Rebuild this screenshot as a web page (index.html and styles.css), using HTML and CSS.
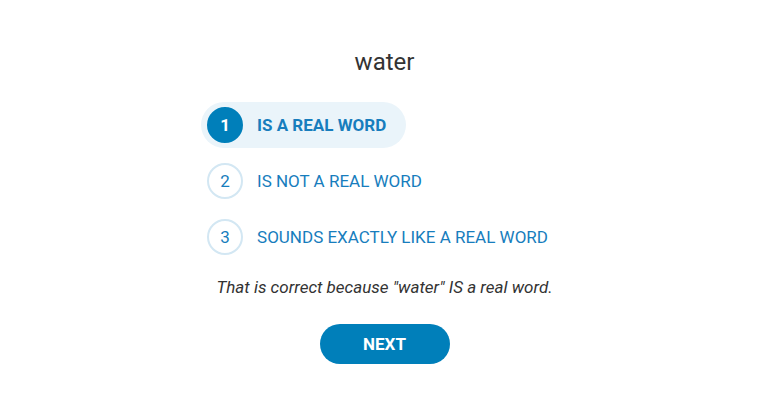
FILE: index.html
```html
<!DOCTYPE html>
<html>
<head>
<meta charset="utf-8">
<link rel="stylesheet" href="styles.css">
</head>
<body>
<main class="quiz">
  <h1 class="word">water</h1>
  <ul class="options">
    <li class="option selected"><span class="num">1</span><span class="label">IS A REAL WORD</span></li>
    <li class="option"><span class="num">2</span><span class="label">IS NOT A REAL WORD</span></li>
    <li class="option"><span class="num">3</span><span class="label">SOUNDS EXACTLY LIKE A REAL WORD</span></li>
  </ul>
  <p class="feedback">That is correct because "water" IS a real word.</p>
  <button class="next">NEXT</button>
</main>
</body>
</html>
```
FILE: styles.css
```css
html, body {
  margin: 0;
  padding: 0;
  background: #fff;
}
body {
  font-family: Roboto, "Noto Sans", sans-serif;
  color: #333;
}
.quiz {
  display: flex;
  flex-direction: column;
  align-items: center;
  padding-top: 48px;
  padding-left: 1px;
}
.word {
  margin: 0;
  font-size: 24px;
  font-weight: 400;
  line-height: 28px;
  color: #333;
}
.options {
  list-style: none;
  margin: 26px 0 0 0;
  padding: 0;
  display: flex;
  flex-direction: column;
  align-items: flex-start;
  gap: 10px;
}
.option {
  display: flex;
  align-items: center;
  gap: 14px;
  height: 46px;
  padding: 0 20px 0 6px;
  border-radius: 23px;
  color: #177dbd;
  font-size: 17px;
}
.option.selected {
  background: #eaf4fa;
  font-weight: 700;
}
.num {
  box-sizing: border-box;
  width: 36px;
  height: 36px;
  border-radius: 50%;
  border: 2px solid #d3e7f3;
  display: flex;
  align-items: center;
  justify-content: center;
  font-size: 17px;
  font-weight: 400;
}
.selected .num {
  background: #007fba;
  border-color: #007fba;
  color: #fff;
  font-weight: 700;
}
.feedback {
  margin: 17px 0 0 0;
  font-style: italic;
  font-size: 17px;
  line-height: 20px;
  color: #333;
}
.next {
  margin-top: 27px;
  width: 130px;
  height: 40px;
  border: none;
  border-radius: 20px;
  background: #007fba;
  color: #fff;
  font-family: Roboto, "Noto Sans", sans-serif;
  font-size: 17px;
  font-weight: 700;
}
```
